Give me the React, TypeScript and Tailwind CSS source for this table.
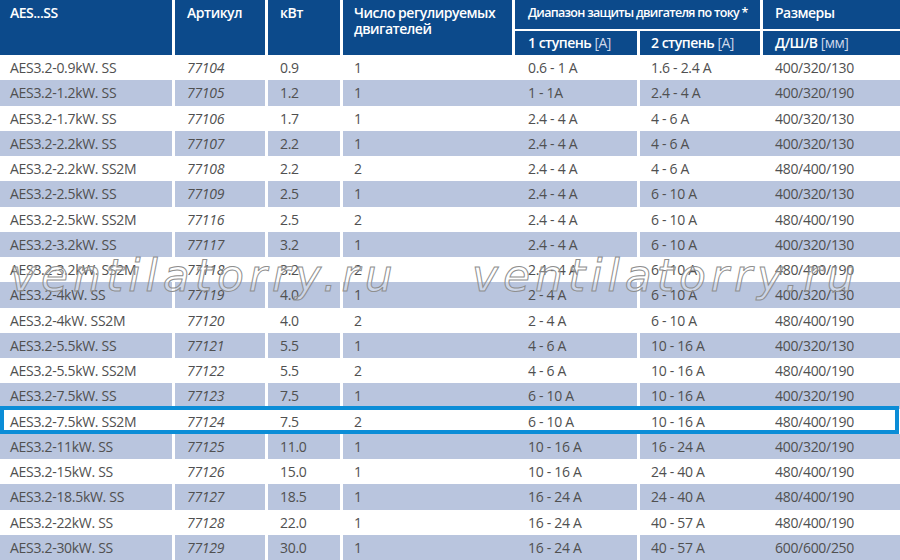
const rows: [string, string, string, string, string, string, string][] = [
  ["AES3.2-0.9kW. SS", "77104", "0.9", "1", "0.6 - 1 A", "1.6 - 2.4 A", "400/320/130"],
  ["AES3.2-1.2kW. SS", "77105", "1.2", "1", "1 - 1A", "2.4 - 4 A", "400/320/190"],
  ["AES3.2-1.7kW. SS", "77106", "1.7", "1", "2.4 - 4 A", "4 - 6 A", "400/320/130"],
  ["AES3.2-2.2kW. SS", "77107", "2.2", "1", "2.4 - 4 A", "4 - 6 A", "400/320/130"],
  ["AES3.2-2.2kW. SS2M", "77108", "2.2", "2", "2.4 - 4 A", "4 - 6 A", "480/400/190"],
  ["AES3.2-2.5kW. SS", "77109", "2.5", "1", "2.4 - 4 A", "6 - 10 A", "400/320/130"],
  ["AES3.2-2.5kW. SS2M", "77116", "2.5", "2", "2.4 - 4 A", "6 - 10 A", "480/400/190"],
  ["AES3.2-3.2kW. SS", "77117", "3.2", "1", "2.4 - 4 A", "6 - 10 A", "400/320/130"],
  ["AES3.2-3.2kW. SS2M", "77118", "3.2", "2", "2.4 - 4 A", "6 - 10 A", "480/400/190"],
  ["AES3.2-4kW. SS", "77119", "4.0", "1", "2 - 4 A", "6 - 10 A", "400/320/130"],
  ["AES3.2-4kW. SS2M", "77120", "4.0", "2", "2 - 4 A", "6 - 10 A", "480/400/190"],
  ["AES3.2-5.5kW. SS", "77121", "5.5", "1", "4 - 6 A", "10 - 16 A", "400/320/130"],
  ["AES3.2-5.5kW. SS2M", "77122", "5.5", "2", "4 - 6 A", "10 - 16 A", "480/400/190"],
  ["AES3.2-7.5kW. SS", "77123", "7.5", "1", "6 - 10 A", "10 - 16 A", "400/320/190"],
  ["AES3.2-7.5kW. SS2M", "77124", "7.5", "2", "6 - 10 A", "10 - 16 A", "480/400/190"],
  ["AES3.2-11kW. SS", "77125", "11.0", "1", "10 - 16 A", "16 - 24 A", "400/320/190"],
  ["AES3.2-15kW. SS", "77126", "15.0", "1", "10 - 16 A", "24 - 40 A", "480/400/190"],
  ["AES3.2-18.5kW. SS", "77127", "18.5", "1", "16 - 24 A", "24 - 40 A", "480/400/190"],
  ["AES3.2-22kW. SS", "77128", "22.0", "1", "16 - 24 A", "40 - 57 A", "480/400/190"],
  ["AES3.2-30kW. SS", "77129", "30.0", "1", "16 - 24 A", "40 - 57 A", "600/600/250"],
];

const HIGHLIGHT = 14;

export default function App() {
  return (
    <div className="relative w-[900px] h-[560px] overflow-hidden bg-white font-['Open_Sans',sans-serif] text-[14px] tracking-[-0.3px]">
      {/* Header */}
      <div className="grid grid-cols-[172px_90px_72px_169px_122px_120px_1fr] grid-rows-[29px_24px] gap-x-[3px] gap-y-[2px] h-[55px] text-white font-semibold leading-[16px] tracking-[-0.5px] whitespace-nowrap">
        <div className="row-span-2 bg-[#0c4a8b] pl-[10px] pt-[5px]">AES...SS</div>
        <div className="row-span-2 bg-[#0c4a8b] pl-[12px] pt-[5px]">Артикул</div>
        <div className="row-span-2 bg-[#0c4a8b] pl-[12px] pt-[5px]">кВт</div>
        <div className="row-span-2 bg-[#0c4a8b] pl-[11px] pt-[5px]">
          Число регулируемых
          <br />
          двигателей
        </div>
        <div className="col-span-2 bg-[#0c4a8b] pl-[13px] pt-[5px] text-[12.5px] tracking-[-0.7px]">
          Диапазон защиты двигателя по току *
        </div>
        <div className="bg-[#0c4a8b] pl-[12px] pt-[5px]">Размеры</div>
        <div className="bg-[#0c4a8b] pl-[13px] pt-[4px]">
          1 ступень <span className="font-normal text-[#cfd8ea]">[A]</span>
        </div>
        <div className="bg-[#0c4a8b] pl-[11px] pt-[4px]">
          2 ступень <span className="font-normal text-[#cfd8ea]">[A]</span>
        </div>
        <div className="bg-[#0c4a8b] pl-[12px] pt-[4px]">
          Д/Ш/В <span className="font-normal text-[#cfd8ea]">[мм]</span>
        </div>
      </div>

      {/* Rows */}
      <div className="flex flex-col text-[#505050]">
        {rows.map((r, i) => {
          const odd = i % 2 === 1;
          const cell = odd ? "bg-[#b9c5de]" : "bg-white";
          return (
            <div
              key={r[0]}
              className="relative grid grid-cols-[172px_90px_72px_294px_1fr] gap-x-[3px] h-[25.25px] items-stretch"
            >
              <div className={`${cell} pl-[10px] flex items-center`}>{r[0]}</div>
              <div className={`${cell} pl-[12px] flex items-center italic`}>{r[1]}</div>
              <div className={`${cell} pl-[12px] flex items-center`}>{r[2]}</div>
              <div className={`${cell} flex items-center`}>
                <span className="w-[185px] pl-[11px]">{r[3]}</span>
                <span>{r[4]}</span>
              </div>
              <div className={`${cell} flex items-center`}>
                <span className="w-[135px] pl-[11px]">{r[5]}</span>
                <span>{r[6]}</span>
              </div>
              {i === HIGHLIGHT && (
                <div className="absolute left-0 right-[1px] top-[-3px] bottom-0 border-4 border-[#0b8dd7] pointer-events-none" />
              )}
            </div>
          );
        })}
      </div>

      {/* Watermark */}
      <div className="absolute left-0 top-[246px] w-full pointer-events-none font-['DejaVu_Sans',sans-serif] italic text-[44px] leading-[60px] tracking-[5px] text-[rgba(255,255,255,0.3)] [-webkit-text-stroke:1px_#8e8e8e]">
        <span className="absolute left-[10px] top-0">ventilatorry.ru</span>
        <span className="absolute left-[472px] top-0">ventilatorry.ru</span>
      </div>
    </div>
  );
}
